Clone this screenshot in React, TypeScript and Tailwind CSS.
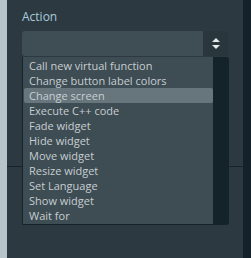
const actions = [
  "Call new virtual function",
  "Change button label colors",
  "Change screen",
  "Execute C++ code",
  "Fade widget",
  "Hide widget",
  "Move widget",
  "Resize widget",
  "Set Language",
  "Show widget",
  "Wait for",
];

function UpDown() {
  return (
    <svg width="8" height="12" viewBox="0 0 8 12" className="fill-[#e4eaec]">
      <path d="M4 0 L8 4 L0 4 Z" />
      <path d="M0 7 L8 7 L4 11 Z" />
    </svg>
  );
}

export default function App() {
  const selected = "Change screen";
  return (
    <div className="flex h-[258px] w-[251px] overflow-hidden bg-[#13222a] font-['Open_Sans',sans-serif]">
      <div className="w-[7px] shrink-0 bg-[#b7c4c9]" />
      <div className="relative flex w-[236px] shrink-0 flex-col bg-[#2c3940] px-[15px] pt-[9px]">
        <div className="text-[12px] leading-[15px] text-[#a8cbdc]">Action</div>
        <div className="mt-[7px] flex h-[25px] w-[206px] overflow-hidden rounded-[3px]">
          <div className="flex-1 bg-[#3f4d54]" />
          <div className="flex w-[25px] items-center justify-center bg-[#29363c]">
            <UpDown />
          </div>
        </div>
        {/* stuff underneath the open menu */}
        <div className="relative mt-[110px] -mx-[15px] h-[1px] bg-[#15232a]" />
        <div className="absolute left-[15px] top-[108px] h-[10px] w-[1px] bg-[#3540a8]" />

        <div className="absolute left-[15px] top-[57px] flex w-[207px] overflow-hidden rounded-r-[3px] border-l border-b border-[#15242b] bg-[#14232a]">
          <ul className="w-[190px] bg-[#3e4c53] pb-[1px] pl-[1px] pt-[1px]">
            {actions.map((a) => (
              <li
                key={a}
                className={
                  "h-[15px] rounded-[2px] pl-[5px] text-[11px] leading-[15px] text-[#c6ced2] " +
                  (a === selected ? "bg-[#67767d]" : "")
                }
              >
                {a}
              </li>
            ))}
          </ul>
        </div>
      </div>
    </div>
  );
}
